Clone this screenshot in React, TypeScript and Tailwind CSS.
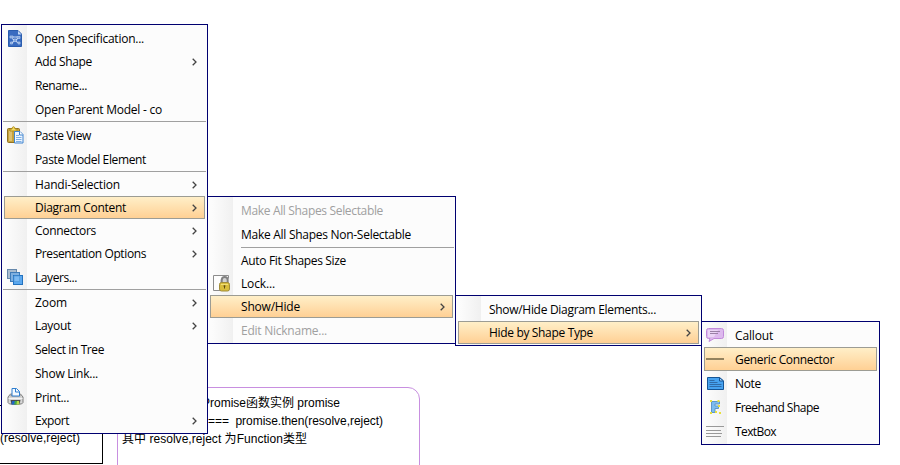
import { useLayoutEffect, useRef, type ReactNode } from "react";
import { clsx } from "clsx";

/* Text whose tracking is adjusted so that it spans exactly `width` pixels. */
function FitText({ width, className, children }: { width: number; className?: string; children: string }) {
  const ref = useRef<HTMLSpanElement>(null);
  useLayoutEffect(() => {
    const el = ref.current;
    if (!el) return;
    el.style.letterSpacing = "0px";
    const natural = el.getBoundingClientRect().width;
    el.style.letterSpacing = `${(width - natural) / children.length}px`;
  }, [width, children]);
  return (
    <span ref={ref} className={clsx("inline-block whitespace-pre", className)}>
      {children}
    </span>
  );
}

function SpecIcon() {
  return (
    <svg width="16" height="17" viewBox="0 0 16 17">
      <path d="M1.500.5h9.500l3.500 3.500v12.500h-13z" fill="#3a6cc0" stroke="#2a5cae" />
      <path d="M11 1v3.500h3.500z" fill="#c5daf6" />
      <path d="M3 6h3v2H3zM10 6.500h3v2h-3zM6.500 9h3v2.500h-3zM3.500 12h2v2h-2zM11 12h2v2h-2z" fill="#7ea3dc" stroke="#b4cbee" strokeWidth=".7" />
      <path d="M6 7h4M5 8.500l2 1.500M11 8.500l-2 1.500M7 11.500l-2 1M9 11.500l2 1" fill="none" stroke="#d3e1f6" strokeWidth=".9" />
    </svg>
  );
}

function PasteIcon() {
  return (
    <svg width="17" height="18" viewBox="0 0 17 18">
      <rect x=".5" y="2.500" width="12" height="14" rx="1" fill="#c6a23c" stroke="#927222" />
      <rect x="2" y="5" width="3" height="10" fill="#dcc072" />
      <path d="M3 5V3h2C5 0 8 0 8 3h2v2z" fill="#f3dc62" stroke="#b08c1c" />
      <path d="M7.500 5.500h5.500l3 3v8.500H7.500z" fill="#eef6ff" stroke="#3f83cf" />
      <path d="M12.500 5.500v3.500H16" fill="#fff" stroke="#3f83cf" />
      <path d="M9 9.500h3M9 11.500h5.500M9 13.500h5.500M9 15.500h5.500" stroke="#7fb0e4" />
    </svg>
  );
}

function LayersIcon() {
  return (
    <svg width="16" height="16" viewBox="0 0 16 16">
      <rect x=".5" y=".5" width="9" height="9" fill="#a9bccf" stroke="#6688ab" />
      <rect x="3.500" y="3.500" width="9" height="9" fill="#7fb0e0" stroke="#3f7cb9" />
      <rect x="6.500" y="6.500" width="9" height="9" fill="#5ba8ef" stroke="#2372bf" />
      <path d="M7 7h5.500v5.500H7z" fill="#7cbaf3" stroke="#559ddd" strokeWidth=".8" />
    </svg>
  );
}

function PrintIcon() {
  return (
    <svg width="17" height="18" viewBox="0 0 17 18">
      <path d="M3.500 6h10l2.500 3v5.500l-1.500 1.500h-12L1 14.500V9z" fill="#d6d6d6" stroke="#7c7c7c" />
      <path d="M3.500 6.500h10v2h-10z" fill="#9a9a9a" />
      <path d="M5 8V.5h4.500l3 3V8z" fill="#f5faff" stroke="#2f7fd0" />
      <path d="M8.500.5v3.500h4" fill="none" stroke="#2f7fd0" />
      <path d="M1.500 10.500h14" stroke="#f4f4f4" />
      <path d="M3.500 12h10l-1 4.500h-8z" fill="#4a4a4a" />
      <path d="M5 13h3.500v3.500H4.500z" fill="#2166c4" />
      <path d="M8 13h2v3.500H7z" fill="#47ab45" />
      <path d="M10 13h2l.5 3.500h-3z" fill="#b8d94a" />
    </svg>
  );
}

function LockIcon() {
  return (
    <svg width="17" height="17" viewBox="0 0 17 17">
      <path d="M.5.5h15v15H.5z" fill="#fdfdfd" stroke="#8c8c8c" />
      <path d="M7 16V5l2-3h5l2 2v12z" fill="#d2d2d2" />
      <path d="M8.800 8V5a2.900 3 0 0 1 5.800 0v3" fill="none" stroke="#808080" strokeWidth="1.800" />
      <rect x="6.500" y="7.500" width="10" height="8.500" rx="2" fill="#d8bd3c" stroke="#a08c3a" />
      <path d="M8 9.500h7" stroke="#f1df77" />
      <path d="M11.500 10.500v3M10.500 11h2" stroke="#5d4a10" />
    </svg>
  );
}

function CalloutIcon() {
  return (
    <svg width="18" height="14" viewBox="0 0 18 14">
      <path d="M2.500.5h13q2 0 2 2v6q0 2-2 2H8L3 13.500l1-3H2.500q-2 0-2-2v-6q0-2 2-2z" fill="#ddb9ee" stroke="#c18ada" />
      <path d="M2 2h10l-4 7H2z" fill="#ebd5f6" />
      <path d="M4 3.500h10M4 5.500h8" stroke="#9a80a6" />
    </svg>
  );
}

function ConnectorIcon() {
  return (
    <svg width="18" height="2" viewBox="0 0 18 2">
      <rect width="18" height="2" fill="#93835f" />
    </svg>
  );
}

function NoteIcon() {
  return (
    <svg width="17" height="13" viewBox="0 0 17 13">
      <path d="M.5.5h12l4 3.500v8.500H.5z" fill="#46a2f0" stroke="#155596" />
      <path d="M12.500.5V4h4z" fill="#a8d4fb" stroke="#155596" />
      <path d="M2.500 3.500h5M2.500 5.500h8M2.500 7.500h12M2.500 9.500h12" stroke="#2f6ba8" />
    </svg>
  );
}

function FreehandIcon() {
  return (
    <svg className="ml-px" width="12" height="15" viewBox="0 0 12 15">
      <path d="M1.500 1.500h8V4H5v2h3.500v2.500H5v4H1.500z" fill="#7cbcf0" stroke="#5f97c8" />
      <path
        d="M0 0h2v2H0zM7.500 0h2v2h-2zM8 5h2v2H8zM0 12h2v2H0zM5 11h2v2H5zM9 12h2v2H9z"
        fill="#e7df3d"
      />
    </svg>
  );
}

function TextBoxIcon() {
  return (
    <svg width="18" height="11" viewBox="0 0 18 11">
      <path d="M0 .5h18M0 4.500h15M0 7.500h16M0 10.500h15" stroke="#999" />
    </svg>
  );
}

type Row = {
  text?: string;
  w?: number;
  sub?: boolean;
  active?: boolean;
  disabled?: boolean;
  short?: boolean;
  icon?: ReactNode;
  sep?: "full" | "inset";
};

const mainRows: Row[] = [
  { text: "Open Specification...", w: 109, icon: <SpecIcon /> },
  { text: "Add Shape", w: 57, sub: true },
  { text: "Rename...", w: 52 },
  { text: "Open Parent Model - co", w: 127 },
  { sep: "full" },
  { text: "Paste View", w: 56, icon: <PasteIcon /> },
  { text: "Paste Model Element", w: 111 },
  { sep: "full" },
  { text: "Handi-Selection", w: 85, sub: true },
  { text: "Diagram Content", w: 91, sub: true, active: true },
  { text: "Connectors", w: 61, sub: true },
  { text: "Presentation Options", w: 111, sub: true },
  { text: "Layers...", w: 42, icon: <LayersIcon /> },
  { sep: "full" },
  { text: "Zoom", w: 32, sub: true },
  { text: "Layout", w: 36, sub: true },
  { text: "Select in Tree", w: 69 },
  { text: "Show Link...", w: 63 },
  { text: "Print...", w: 34, icon: <PrintIcon /> },
  { text: "Export", w: 34, sub: true },
];

const contentRows: Row[] = [
  { text: "Make All Shapes Selectable", w: 142, disabled: true },
  { text: "Make All Shapes Non-Selectable", w: 170 },
  { sep: "inset" },
  { text: "Auto Fit Shapes Size", w: 105 },
  { text: "Lock...", w: 34, icon: <LockIcon />, short: true },
  { text: "Show/Hide", w: 59, sub: true, active: true },
  { text: "Edit Nickname...", w: 86, disabled: true },
];

const showRows: Row[] = [
  { text: "Show/Hide Diagram Elements...", w: 167 },
  { text: "Hide by Shape Type", w: 104, sub: true, active: true },
];

const typeRows: Row[] = [
  { text: "Callout", w: 38, icon: <CalloutIcon /> },
  { text: "Generic Connector", w: 99, icon: <ConnectorIcon />, active: true },
  { text: "Note", w: 26, icon: <NoteIcon /> },
  { text: "Freehand Shape", w: 84, icon: <FreehandIcon /> },
  { text: "TextBox", w: 41, icon: <TextBoxIcon /> },
];

function MenuRow({ row }: { row: Row }) {
  if (row.sep) {
    return (
      <div className={clsx("h-[2px]", row.sep === "inset" ? "pt-px pl-[33px] pr-px" : "px-px")}>
        <div className="h-px bg-[#a0a0a0]" />
      </div>
    );
  }
  const compact = row.sub || row.short;
  return (
    <div className={clsx("px-[2px]", compact ? "h-[23px]" : "h-6")}>
      <div
        className={clsx(
          "flex h-full items-center border pr-[7px]",
          row.active ? "border-[#9c9c94] bg-linear-to-b from-[#ffefc8] to-[#ffd094]" : "border-transparent",
        )}
      >
        <div className="flex w-[30px] shrink-0 items-center">
          <div className="flex w-[20px] items-center justify-center">{row.icon}</div>
        </div>
        <FitText
          width={row.w ?? 0}
          className={clsx("leading-[18px]", !compact && "mt-[2px]", row.disabled ? "text-[#a0a0a0]" : "text-black")}
        >
          {row.text ?? ""}
        </FitText>
        {row.sub && (
          <svg className="ml-auto shrink-0" width="5" height="8" viewBox="0 0 5 8">
            <path d="M.7.7 4 4 .7 7.300" fill="none" stroke="#444" strokeWidth="1.300" />
          </svg>
        )}
      </div>
    </div>
  );
}

function Menu({ rows, className }: { rows: Row[]; className: string }) {
  return (
    <div
      className={clsx(
        "absolute border border-[#000070] bg-[#fcfcfc] bg-[linear-gradient(to_right,#fcfcfc_4px,#f0f0f0_25px,#fcfcfc_25px)] py-px font-['Open_Sans','Noto_Sans',sans-serif] text-[12px]",
        className,
      )}
    >
      {rows.map((row, i) => (
        <MenuRow key={i} row={row} />
      ))}
    </div>
  );
}

export default function App() {
  return (
    <div className="relative h-[465px] w-[900px] overflow-hidden bg-white font-['Liberation_Sans','Noto_Sans_CJK_SC',sans-serif] text-[12px] leading-[18px] text-black">
      <div className="absolute top-[405px] -left-[20px] h-[59px] w-[123px] border border-black pt-[23px] pl-[19px]">
        <FitText width={80}>(resolve,reject)</FitText>
      </div>
      <div className="absolute top-[387px] left-[117px] flex h-[100px] w-[303px] flex-col items-start rounded-xl border border-[#c88fe0] pt-[6px] pl-1">
        <FitText width={138} className="ml-[80px]">Promise函数实例 promise</FitText>
        <FitText width={175} className="ml-[86px]">{"===  promise.then(resolve,reject)"}</FitText>
        <FitText width={185}>其中 resolve,reject 为Function类型</FitText>
      </div>
      <Menu rows={mainRows} className="top-[24px] left-[1px] w-[207px]" />
      <Menu rows={contentRows} className="top-[196px] left-[207px] w-[249px]" />
      <Menu rows={showRows} className="top-[295px] left-[455px] w-[247px]" />
      <Menu rows={typeRows} className="top-[321px] left-[701px] w-[179px]" />
    </div>
  );
}
